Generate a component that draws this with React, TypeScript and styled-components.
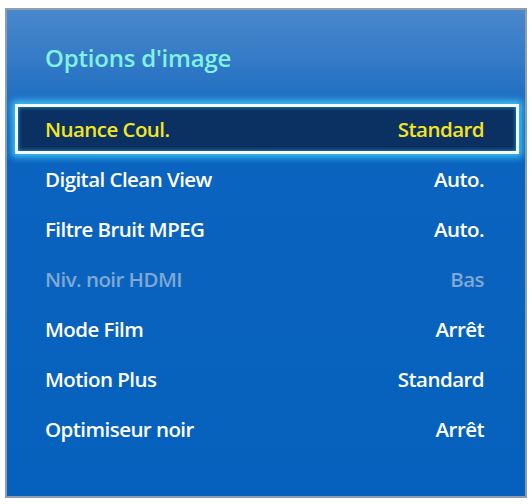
import React from 'react';
import styled, { createGlobalStyle } from 'styled-components';

const GlobalStyle = createGlobalStyle`
  html, body {
    margin: 0;
    padding: 0;
    background: #ffffff;
  }
  body {
    font-family: "Open Sans", "Noto Sans", sans-serif;
  }
`;

type Option = {
  label: string;
  value: string;
  disabled?: boolean;
};

const OPTIONS: Option[] = [
  { label: 'Nuance Coul.', value: 'Standard' },
  { label: 'Digital Clean View', value: 'Auto.' },
  { label: 'Filtre Bruit MPEG', value: 'Auto.' },
  { label: 'Niv. noir HDMI', value: 'Bas', disabled: true },
  { label: 'Mode Film', value: 'Arrêt' },
  { label: 'Motion Plus', value: 'Standard' },
  { label: 'Optimiseur noir', value: 'Arrêt' },
];

const Panel = styled.section`
  box-sizing: border-box;
  width: 522px;
  height: 490px;
  margin: 8px 5px 6px 5px;
  border: 2px solid #8e9cab;
  background: linear-gradient(
    180deg,
    #4a88cc 0px,
    #2f77c5 60px,
    #0b64bf 125px,
    #0561bd 100%
  );
  display: flex;
  flex-direction: column;
`;

const Title = styled.h1`
  margin: 0;
  height: 94px;
  padding-left: 38px;
  display: flex;
  align-items: center;
  font-size: 24px;
  font-weight: 600;
  letter-spacing: -0.2px;
  color: #80f2e2;
`;

const List = styled.ul`
  list-style: none;
  margin: 0 6px 0 8px;
  padding: 0;
  display: flex;
  flex-direction: column;
`;

const Row = styled.li<{ $selected?: boolean; $disabled?: boolean }>`
  box-sizing: border-box;
  height: 50px;
  padding: 0 32px 0 27px;
  display: flex;
  align-items: center;
  justify-content: space-between;
  border: 3px solid ${(p) => (p.$selected ? '#f4fbff' : 'transparent')};
  background: ${(p) => (p.$selected ? '#0a3162' : 'transparent')};
  box-shadow: ${(p) =>
    p.$selected
      ? '0 0 7px 3px rgba(70, 210, 255, 0.9), inset 0 0 4px rgba(70, 200, 255, 0.7)'
      : 'none'};
  font-size: 20.5px;
  font-weight: 600;
  letter-spacing: -0.55px;
  color: ${(p) => (p.$selected ? '#f6e41f' : p.$disabled ? '#7fa8d4' : '#ffffff')};
`;

const Label = styled.span``;

const Value = styled.span`
  text-align: right;
`;

export default function App() {
  return (
    <>
      <GlobalStyle />
      <Panel>
        <Title>Options d'image</Title>
        <List>
          {OPTIONS.map((opt, i) => (
            <Row key={opt.label} $selected={i === 0} $disabled={opt.disabled}>
              <Label>{opt.label}</Label>
              <Value>{opt.value}</Value>
            </Row>
          ))}
        </List>
      </Panel>
    </>
  );
}
